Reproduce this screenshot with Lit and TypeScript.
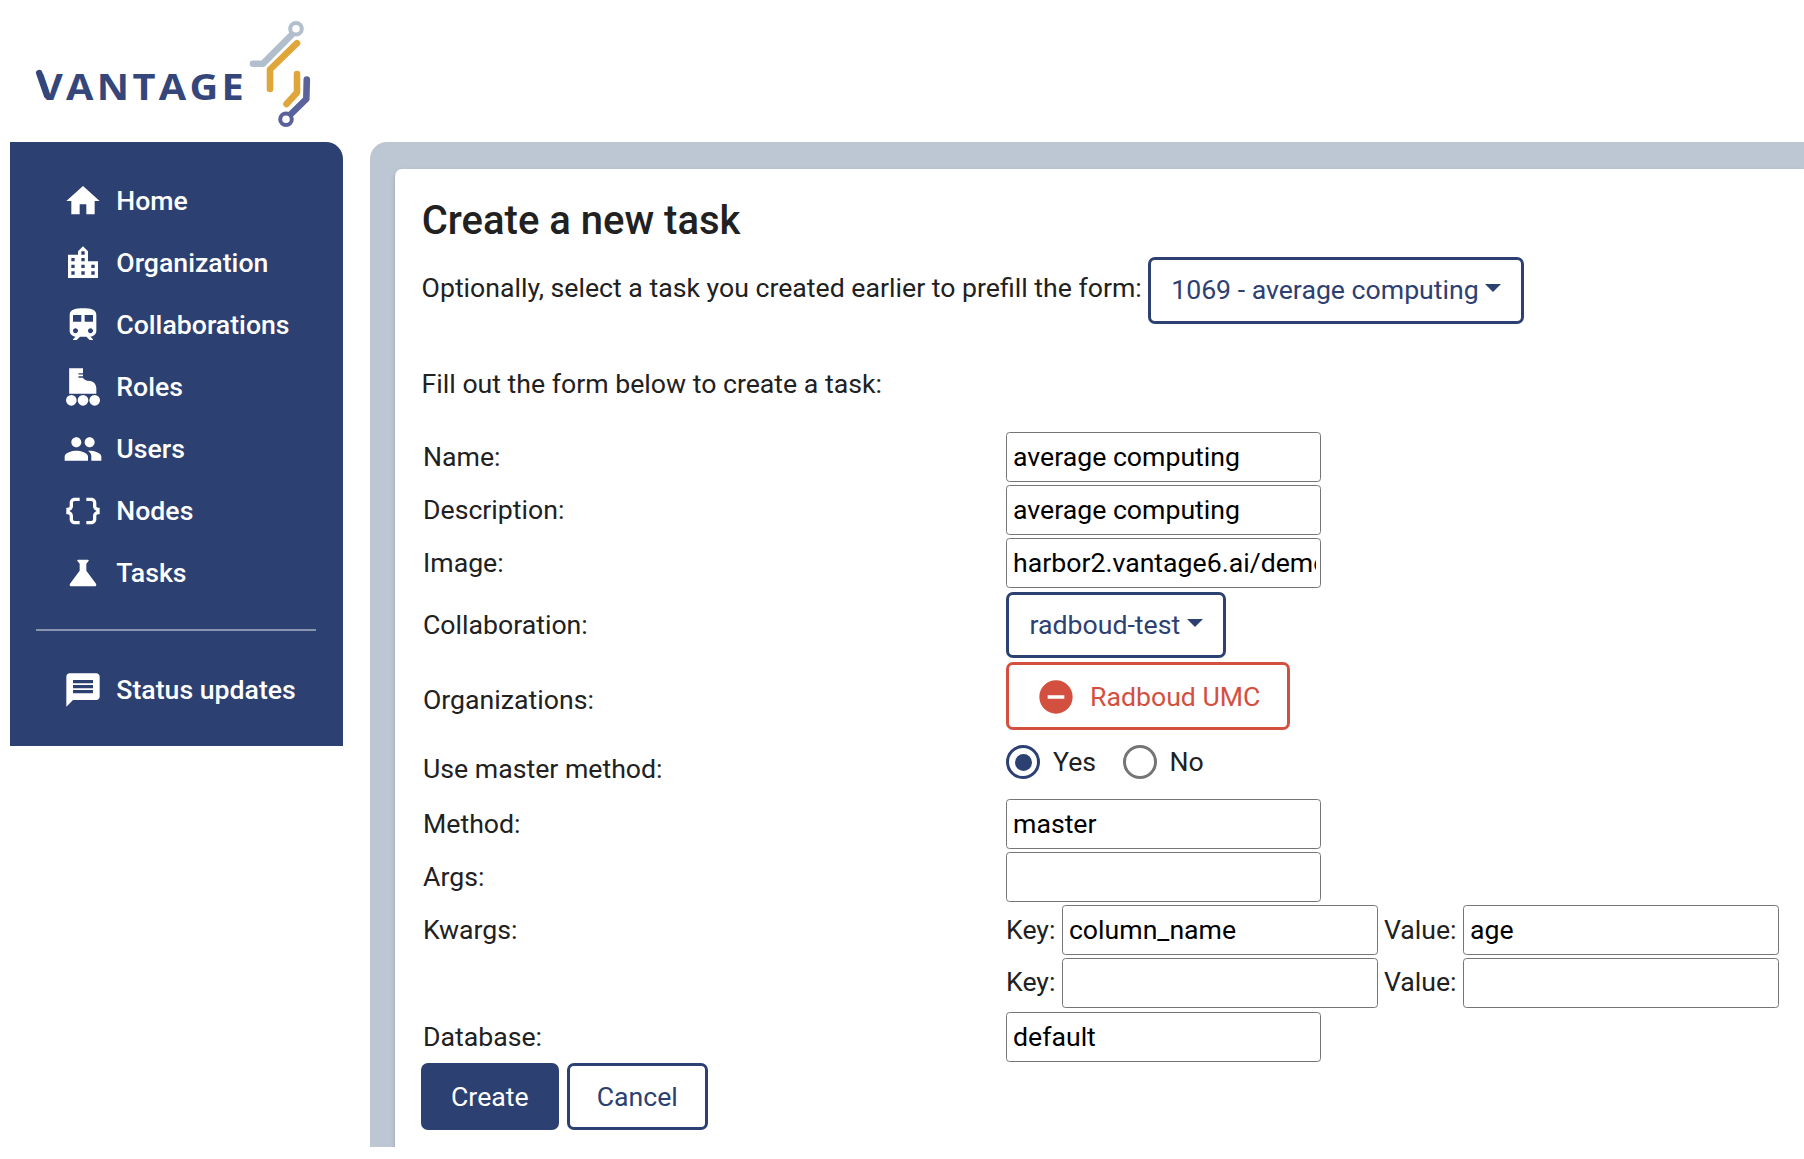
import { LitElement, html, css, svg, nothing } from "lit";
import { customElement } from "lit/decorators.js";

const ICONS: Record<string, string> = {
  home: "M10 20v-6h4v6h5v-8h3L12 3 2 12h3v8z",
  city: "M15 11V5l-3-3-3 3v2H3v14h18V11h-6zm-8 8H5v-2h2v2zm0-4H5v-2h2v2zm0-4H5V9h2v2zm6 8h-2v-2h2v2zm0-4h-2v-2h2v2zm0-4h-2V9h2v2zm0-4h-2V5h2v2zm6 12h-2v-2h2v2zm0-4h-2v-2h2v2z",
  train: "M12 2c-4 0-8 .5-8 4v9.5C4 17.43 5.57 19 7.5 19L6 20.5v.5h2.23l2-2H14l2 2h2v-.5L16.5 19c1.93 0 3.5-1.57 3.5-3.5V6c0-3.5-3.58-4-8-4zM7.5 17c-.83 0-1.5-.67-1.5-1.5S6.67 14 7.5 14s1.5.67 1.5 1.5S8.33 17 7.5 17zm3.5-7H6V6h5v4zm2 0V6h5v4h-5zm3.5 7c-.83 0-1.5-.67-1.5-1.5s.67-1.5 1.5-1.5 1.5.67 1.5 1.5-.67 1.5-1.5 1.5z",
  skate: "M12 .8H3.7V16H20v-3.1c0-2.5-1.6-4.2-3.8-4.5l-1.6-.2c-1.3-.2-2.2-.8-2.6-1.7H9.3V5.6H12V4.5H9.3V3.8H12zM5 16.8a3.2 3.2 0 1 0 0 6.4 3.2 3.2 0 0 0 0-6.4zm7 0a3.2 3.2 0 1 0 0 6.4 3.2 3.2 0 0 0 0-6.4zm7 0a3.2 3.2 0 1 0 0 6.4 3.2 3.2 0 0 0 0-6.4z",
  group: "M16 11c1.66 0 2.99-1.34 2.99-3S17.66 5 16 5c-1.66 0-3 1.34-3 3s1.34 3 3 3zm-8 0c1.66 0 2.99-1.34 2.99-3S9.66 5 8 5C6.34 5 5 6.34 5 8s1.34 3 3 3zm0 2c-2.33 0-7 1.17-7 3.5V19h14v-2.5c0-2.33-4.67-3.5-7-3.5zm8 0c-.29 0-.62.02-.97.05 1.16.84 1.97 1.97 1.97 3.45V19h6v-2.5c0-2.33-4.67-3.5-7-3.5z",
  braces: "M4 7v2c0 .55-.45 1-1 1H2v4h1c.55 0 1 .45 1 1v2c0 1.65 1.35 3 3 3h3v-2H7c-.55 0-1-.45-1-1v-2c0-1.3-.84-2.42-2-2.83v-.34C5.16 11.42 6 10.3 6 9V7c0-.55.45-1 1-1h3V4H7C5.35 4 4 5.35 4 7zm17 3c-.55 0-1-.45-1-1V7c0-1.65-1.35-3-3-3h-3v2h3c.55 0 1 .45 1 1v2c0 1.3.84 2.42 2 2.83v.34c-1.16.41-2 1.52-2 2.83v2c0 .55-.45 1-1 1h-3v2h3c1.65 0 3-1.35 3-3v-2c0-.55.45-1 1-1h1v-4h-1z",
  flask: "M19.8 18.4 14 10.67V6.5l1.35-1.69c.26-.33.03-.81-.39-.81H9.04c-.42 0-.65.48-.39.81L10 6.5v4.17L4.2 18.4c-.49.66-.02 1.6.8 1.6h14c.82 0 1.29-.94.8-1.6z",
  message: "M20 2H4c-1.1 0-1.99.9-1.99 2L2 22l4-4h14c1.1 0 2-.9 2-2V4c0-1.1-.9-2-2-2zm-2 12H6v-2h12v2zm0-3H6V9h12v2zm0-3H6V6h12v2z",
  remove: "M12 2C6.48 2 2 6.48 2 12s4.48 10 10 10 10-4.48 10-10S17.52 2 12 2zm5 11H7v-2h10v2z",
};

const icon = (name: string) =>
  html`<svg class="icon" viewBox="0 0 24 24" aria-hidden="true">${svg`<path d=${ICONS[name]}></path>`}</svg>`;

const NAV = [
  ["home", "Home"],
  ["city", "Organization"],
  ["train", "Collaborations"],
  ["skate", "Roles"],
  ["group", "Users"],
  ["braces", "Nodes"],
  ["flask", "Tasks"],
];

@customElement("app-root")
export class AppRoot extends LitElement {
  static styles = css`
    :host {
      display: block;
      height: 1159px;
      overflow: hidden;
      background: #fff;
      color: #212121;
      font: 400 26.67px/40px Roboto, sans-serif;
    }
    * { box-sizing: border-box; }
    .header { height: 142px; }
    .logo { display: block; width: 330px; height: 142px; }
    .wordmark { font: 700 36.5px "Open Sans", sans-serif; letter-spacing: 3px; fill: #34467a; }
    .body { display: flex; align-items: flex-start; padding-left: 10px; gap: 27px; }
    .sidebar {
      flex: none;
      width: 333px;
      height: 604px;
      padding-top: 28px;
      background: #2d4072;
      border-radius: 0 17px 0 0;
      color: #fff;
      font-weight: 500;
    }
    .item { display: flex; align-items: center; height: 62px; padding-left: 53px; gap: 13.3px; }
    .icon { width: 40px; height: 40px; fill: currentColor; flex: none; }
    .rule { height: 2px; margin: 25px 27px 28px 26px; background: #8a94b0; }
    .main {
      flex: 1;
      height: 1005px;
      padding: 27px 0 0 25px;
      overflow: hidden;
      background: #bdc6d3;
      border-radius: 17px 0 0 0;
    }
    .card {
      height: 1100px;
      padding: 26px 0 0 26px;
      background: #fff;
      border-radius: 7px 0 0 0;
      box-shadow: 0 3px 2px -2px rgba(0,0,0,.2), 0 2px 2px rgba(0,0,0,.14), 0 2px 5px rgba(0,0,0,.12);
    }
    .title { margin: 0; height: 62px; padding-left: 0.7px; font-size: 40px; line-height: 51px; font-weight: 500; }
    .prefill { display: flex; height: 67px; margin: 0; padding-left: 0.6px; align-items: center; gap: 5.9px; }
    .prefill-text { padding-bottom: 5px; }
    .hint { margin: 40px 0 28px; padding-left: 0.6px; }
    .btn {
      display: inline-flex;
      align-items: center;
      height: 67px;
      border: 3px solid #2d4072;
      border-radius: 7px;
      background: #fff;
      color: #2d4072;
      font: inherit;
      padding: 0 27px;
      margin: 0;
      white-space: nowrap;
    }
    .select { padding: 0 20px 2px 20.5px; gap: 6.6px; }
    .select-short { height: 66px; padding-bottom: 0; }
    .primary { background: #2d4072; color: #fff; }
    .danger { height: 68px; border-color: #d35040; color: #d35040; gap: 14px; padding: 1.5px 27px 0; }
    .caret { border: 8px solid transparent; border-top-color: currentColor; border-bottom: 0; margin-bottom: 4px; }
    .row { display: flex; align-items: flex-start; height: 53px; }
    .label { display: flex; align-items: center; width: 583px; height: 50px; padding-left: 2px; flex: none; }
    .h54 { height: 54px; }
    .collab { height: 70px; }
    .collab .label { height: 66px; }
    .orgs { height: 76px; }
    .orgs .label { height: 76px; }
    .master { height: 61px; }
    .master .label { height: 61px; }
    .last { height: 51px; }
    .field, .radios, .pair { margin-left: 2px; }
    .input {
      width: 315px;
      height: 50px;
      border: 1.5px solid #767676;
      border-radius: 3.5px;
      padding: 0 4px 0 6px;
      margin: 0 0 0 2px;
      background: #fff;
      color: #000;
      font: inherit;
      outline: none;
    }
    .pair { display: flex; align-items: center; }
    .pair .input { margin-left: 6.5px; width: 316px; }
    .value { margin-left: 6px; }
    .blank .key, .blank .value { padding-bottom: 2px; }
    .radios { display: flex; align-items: center; height: 34px; margin-top: 7px; }
    .radio { display: flex; align-items: center; justify-content: center; width: 34px; height: 34px; border: 3px solid #757575; border-radius: 50%; }
    .on { border-color: #2d4072; }
    .dot { width: 17px; height: 17px; border-radius: 50%; background: #2d4072; }
    .radio-text { margin: 0 26.5px 0 13px; }
    .actions { display: flex; gap: 8px; }
  `;

  private input(value: string) {
    return html`<input class="input" type="text" .value=${value} />`;
  }

  private row(label: string, control: unknown, cls = "") {
    return html`<div class="row ${cls}"><div class="label">${label || nothing}</div>${control}</div>`;
  }

  private pair(key: string, value: string) {
    return html`<div class="pair"><span class="key">Key:</span>${this.input(key)}<span class="value">Value:</span>${this.input(value)}</div>`;
  }

  render() {
    return html`
      <header class="header">
        <svg class="logo" viewBox="0 0 330 142">
          <text class="wordmark" x="37" y="100" textLength="210" lengthAdjust="spacingAndGlyphs">VANTAGE</text>
          <path d="M39.2 73L47 95.5" fill="none" stroke="#34467a" stroke-width="6.4" stroke-linecap="round"></path>
          <g fill="none" stroke-width="6.6" stroke-linecap="round" stroke-linejoin="round">
            <path stroke="#b1bfcd" d="M253 63.7H263L291 35.5"></path>
            <path stroke="#e1a63a" d="M297 43.2L270 69.5V89"></path>
            <path stroke="#e1a63a" d="M297 74V92.5L286.5 104"></path>
            <path stroke="#5a629b" d="M306.8 79.5L306.3 99L291 114"></path>
          </g>
          <circle cx="296" cy="28.7" r="5.8" fill="#fff" stroke="#b1bfcd" stroke-width="4"></circle>
          <circle cx="286" cy="119.3" r="5.8" fill="#fff" stroke="#5a629b" stroke-width="4"></circle>
        </svg>
      </header>
      <div class="body">
        <nav class="sidebar">
          ${NAV.map(([i, t]) => html`<div class="item">${icon(i)}<span>${t}</span></div>`)}
          <div class="rule"></div>
          <div class="item">${icon("message")}<span>Status updates</span></div>
        </nav>
        <main class="main">
          <section class="card">
            <h1 class="title">Create a new task</h1>
            <div class="prefill">
              <span class="prefill-text">Optionally, select a task you created earlier to prefill the form:</span>
              <button class="btn select"><span>1069 - average computing</span><span class="caret"></span></button>
            </div>
            <p class="hint">Fill out the form below to create a task:</p>
            ${this.row("Name:", this.input("average computing"))}
            ${this.row("Description:", this.input("average computing"))}
            ${this.row("Image:", this.input("harbor2.vantage6.ai/demo/average"), "h54")}
            ${this.row("Collaboration:", html`<div class="field"><button class="btn select select-short"><span>radboud-test</span><span class="caret"></span></button></div>`, "collab")}
            ${this.row("Organizations:", html`<div class="field"><button class="btn danger">${icon("remove")}<span>Radboud UMC</span></button></div>`, "orgs")}
            ${this.row("Use master method:", html`<div class="radios">
              <span class="radio on"><span class="dot"></span></span><span class="radio-text">Yes</span>
              <span class="radio"></span><span class="radio-text">No</span>
            </div>`, "master")}
            ${this.row("Method:", this.input("master"))}
            ${this.row("Args:", this.input(""))}
            ${this.row("Kwargs:", this.pair("column_name", "age"))}
            ${this.row("", this.pair("", ""), "h54 blank")}
            ${this.row("Database:", this.input("default"), "last")}
            <div class="actions">
              <button class="btn primary">Create</button>
              <button class="btn">Cancel</button>
            </div>
          </section>
        </main>
      </div>
    `;
  }
}
